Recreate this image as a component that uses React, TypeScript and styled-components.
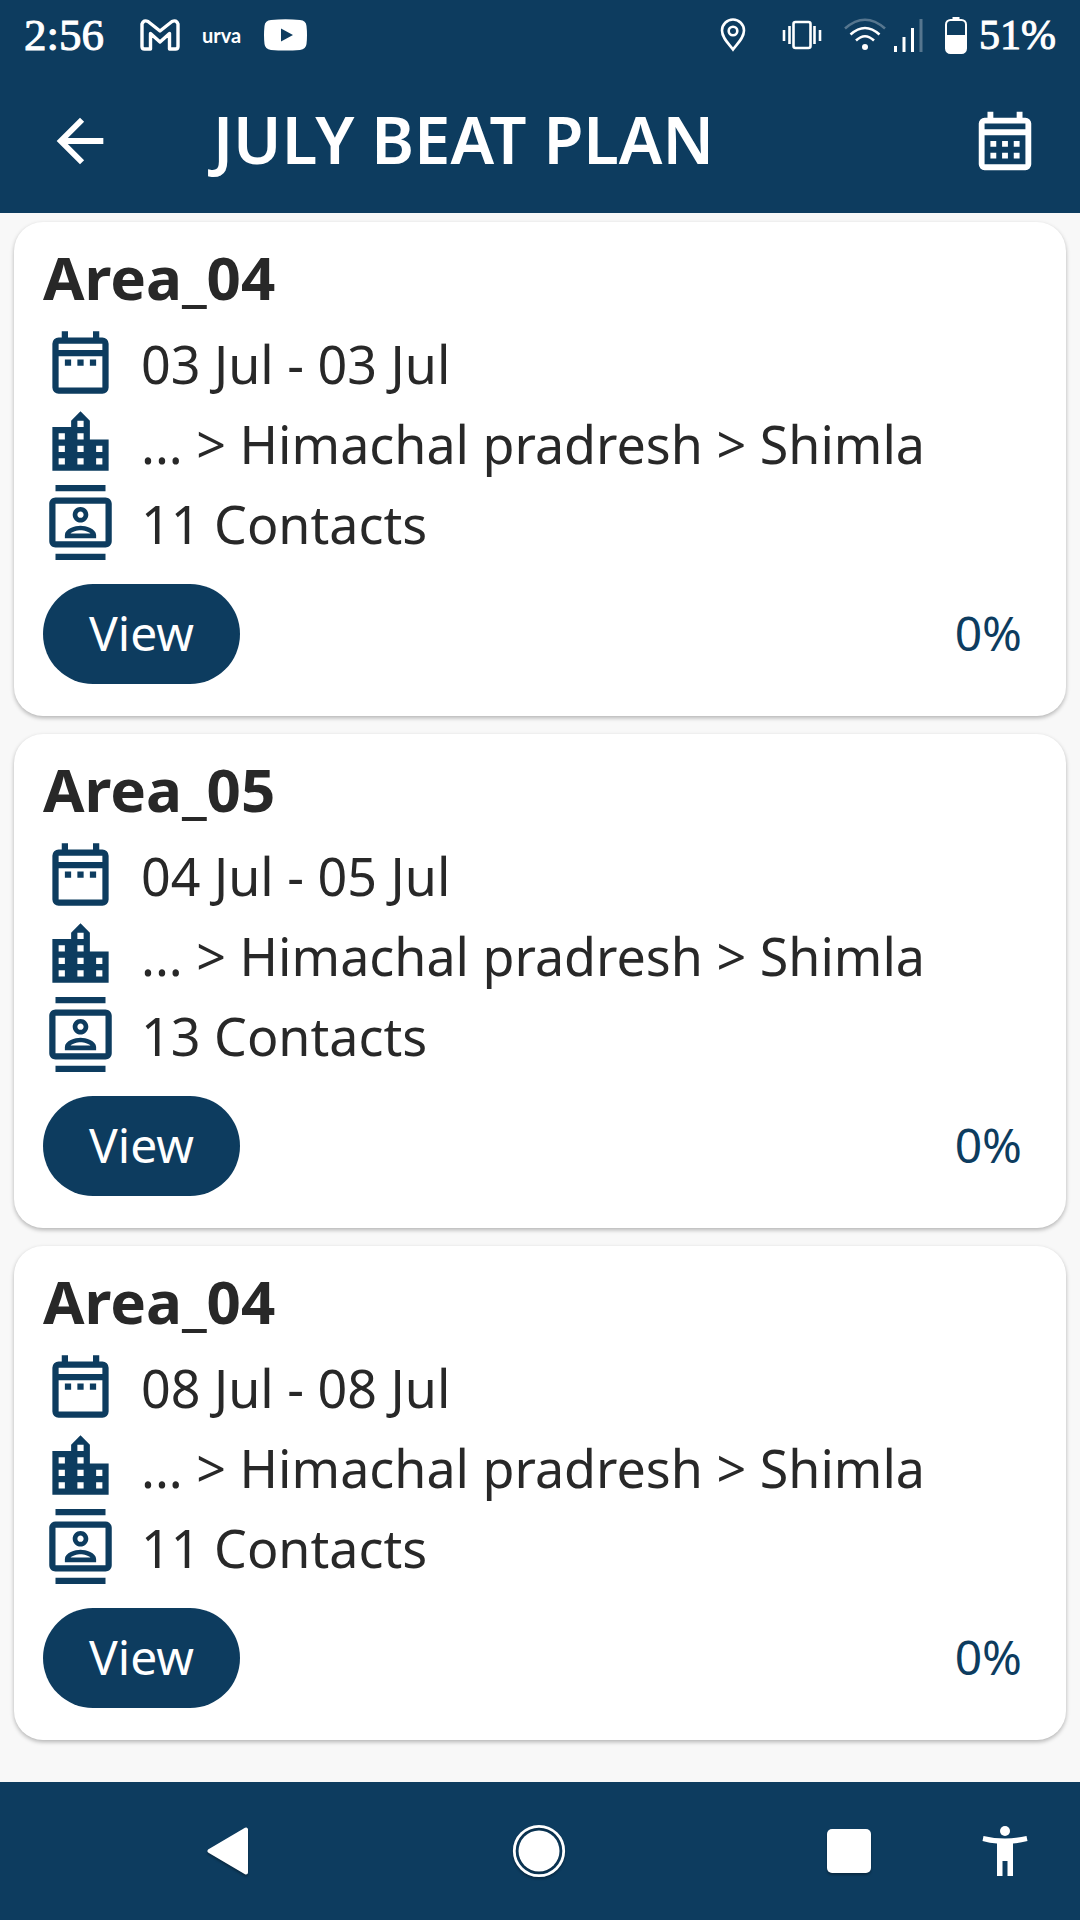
import React from "react";
import styled, { createGlobalStyle } from "styled-components";

const NAVY = "#0d3c5f";
const SANS = '"Noto Sans", "Open Sans", sans-serif';

const GlobalStyle = createGlobalStyle`
  * { box-sizing: border-box; }
  body { margin: 0; background: #f8f8f8; color: #282828; font-family: ${SANS}; }
  h1, h2, p, ul { margin: 0; padding: 0; }
  svg { display: block; flex: none; }
`;

const Screen = styled.div`
  min-height: 100vh;
  display: flex;
  flex-direction: column;
`;

const StatusBar = styled.div`
  height: 70px;
  padding: 0 24px;
  display: flex;
  align-items: center;
  justify-content: space-between;
  background: ${NAVY};
  color: #fff;
`;

const StatusGroup = styled.div<{ $gap: number }>`
  display: flex;
  align-items: center;
  gap: ${(p) => p.$gap}px;
`;

const StatusText = styled.span<{ $size: number; $width?: number }>`
  font: 400 ${(p) => p.$size}px/48px "Liberation Serif", serif;
  -webkit-text-stroke: 1px #fff;
  min-width: ${(p) => p.$width ?? 0}px;
`;

const BrandMark = styled.span`
  width: 40px;
  font: 700 20px/24px Lato, sans-serif;
`;

const AppBar = styled.header`
  height: 143px;
  padding: 0 40px 2px 45px;
  display: flex;
  align-items: center;
  background: ${NAVY};
  color: #fff;
`;

const IconButton = styled.button`
  width: 70px;
  height: 70px;
  padding: 0;
  display: grid;
  place-items: center;
  border: 0;
  background: none;
  color: inherit;
  cursor: pointer;
`;

const Title = styled.h1`
  flex: 1;
  padding: 0 0 4px 98px;
  font-size: 65px;
  line-height: 84px;
  font-weight: 600;
  white-space: nowrap;
`;

const PlanList = styled.ul`
  flex: 1;
  padding: 9px 14px;
  display: flex;
  flex-direction: column;
  gap: 18px;
  list-style: none;
`;

const Card = styled.li`
  padding: 20px 44px 32px 29px;
  border-radius: 29px;
  background: #fff;
  box-shadow: 0 2px 4px rgba(0, 0, 0, 0.28);
`;

const AreaName = styled.h2`
  height: 80px;
  font-size: 60px;
  line-height: 70px;
  font-weight: 700;
`;

const Detail = styled.p`
  height: 80px;
  display: flex;
  align-items: center;
  gap: 23px;
  font-size: 52px;
  line-height: 72px;
  white-space: nowrap;

  svg { color: ${NAVY}; }
`;

const DetailText = styled.span`
  padding-top: 4px;
`;

const CardFooter = styled.div`
  margin-top: 22px;
  display: flex;
  align-items: center;
  justify-content: space-between;
`;

const ViewButton = styled.button`
  width: 197px;
  height: 100px;
  padding: 0 0 3px;
  border: 0;
  border-radius: 50px;
  background: ${NAVY};
  color: #fff;
  font: 400 48px/64px ${SANS};
  cursor: pointer;
`;

const Progress = styled.span`
  padding-bottom: 3px;
  color: ${NAVY};
  font-size: 48px;
  line-height: 64px;
`;

const NavBar = styled.nav`
  height: 138px;
  padding: 0 30px 0 183px;
  display: flex;
  align-items: center;
  gap: 66px;
  background: ${NAVY};
  color: #fff;
`;

const NavMain = styled.div`
  flex: 1;
  display: flex;
  justify-content: space-between;

  svg { filter: drop-shadow(0 2px 1px rgba(0, 0, 0, 0.3)); }
`;

const NavButton = styled(IconButton)`
  width: 90px;
  height: 90px;
`;

const Material = ({ d, size }: { d: string; size: number }) => (
  <svg width={size} height={size} viewBox="0 0 24 24" fill="currentColor" fillRule="evenodd" aria-hidden="true">
    <path d={d} />
  </svg>
);

const FRAME =
  "M6 2h2v2h8V2h2v2h1a2 2 0 0 1 2 2v14a2 2 0 0 1-2 2H5a2 2 0 0 1-2-2V6a2 2 0 0 1 2-2h1zM5 6v2h14V6zM5 10v10h14V10z";
const DATE = FRAME + "M7 11h2v2H7zM11 11h2v2h-2zM15 11h2v2h-2z";
const MONTH = FRAME + "M7 12h2v2H7zM11 12h2v2h-2zM15 12h2v2h-2zM7 16h2v2H7zM11 16h2v2h-2zM15 16h2v2h-2z";
const BACK = "M20 11H7.83l5.59-5.59L12 4l-8 8 8 8 1.41-1.41L7.83 13H20v-2z";
const CITY =
  "M15 11V5l-3-3-3 3v2H3v14h18V11h-6zm-8 8H5v-2h2v2zm0-4H5v-2h2v2zm0-4H5V9h2v2zm6 8h-2v-2h2v2zm0-4h-2v-2h2v2zm0-4h-2V9h2v2zm0-4h-2V5h2v2zm6 12h-2v-2h2v2zm0-4h-2v-2h2v2z";
const CONTACTS =
  "M20 4H4c-1.1 0-2 .9-2 2v12c0 1.1.9 2 2 2h16c1.1 0 2-.9 2-2V6c0-1.1-.9-2-2-2zm0 14H4V6h16v12zM4 0h16v2H4zm0 22h16v2H4zm8-10c1.38 0 2.5-1.12 2.5-2.5S13.38 7 12 7 9.5 8.12 9.5 9.5 10.62 12 12 12zm0-3.5c.55 0 1 .45 1 1s-.45 1-1 1-1-.45-1-1 .45-1 1-1zm5 7.49C17 13.9 13.69 13 12 13s-5 .9-5 2.99V17h10v-1.01zm-8.19-.49c.61-.52 2.03-1 3.19-1 1.17 0 2.59.48 3.2 1H8.81z";

const MailIcon = () => (
  <svg width="40" height="32" viewBox="0 0 40 32" fill="none" stroke="#fff" strokeWidth="3.400" strokeLinejoin="round" aria-hidden="true">
    <path d="M2 5v22.500q0 2.500 2.500 2.500H10.500V14.500L20 23l9.500-8.500v15.500h6q2.500 0 2.500-2.500V5q-1.500-4.500-6-2.500L20 12 8 2.500Q3.500.5 2 5z" />
  </svg>
);

const VideoIcon = () => (
  <svg width="43" height="32" viewBox="0 0 43 32" fill="#fff" fillRule="evenodd" aria-hidden="true">
    <path d="M7 1Q21.500-.5 36 1q6 .5 6.500 6 1 9 0 18-.5 5-6.500 6-14.500 1-29 0-6-1-6.500-6-1-9 0-18Q1 1.500 7 1zM17 9.500v13l12-6.500z" />
  </svg>
);

const PinIcon = () => (
  <svg width="26" height="34" viewBox="0 0 26 34" fill="none" stroke="#fff" strokeWidth="2.600" aria-hidden="true">
    <path d="M13 31.500C8 25 2 19.500 2 12.500a11 11 0 0 1 22 0C24 19.500 18 25 13 31.500z" />
    <circle cx="13" cy="13" r="4.300" />
  </svg>
);

const VibrateIcon = () => (
  <svg width="40" height="32" viewBox="0 0 40 32" fill="none" stroke="#fff" strokeWidth="2.600" aria-hidden="true">
    <rect x="11.500" y="3" width="17" height="26" rx="2" />
    <path d="M7.500 7v18M32.500 7v18M2 11v11M38 11v11" />
  </svg>
);

const WifiIcon = () => (
  <svg width="42" height="34" viewBox="0 0 42 34" fill="none" stroke="#fff" strokeWidth="2.600" aria-hidden="true">
    <path d="M1 10.500Q21-7 41 10.500" opacity=".3" />
    <path d="M6.500 16.500q14.500-13 29 0M12 22.500q9-8.500 18 0" />
    <circle cx="21" cy="29" r="3" fill="#fff" stroke="none" />
  </svg>
);

const SignalIcon = () => (
  <svg width="29" height="34" viewBox="0 0 29 34" fill="#fff" aria-hidden="true">
    <path d="M0 28h3v6H0zM8.500 19h3v15h-3zM17 10h3v24h-3z" />
    <path d="M25.500 1h3v33h-3z" opacity=".3" />
  </svg>
);

const BatteryIcon = () => (
  <svg width="22" height="37" viewBox="0 0 22 37" aria-hidden="true">
    <rect x="1" y="3" width="20" height="33" rx="4.500" fill="none" stroke="#fff" strokeWidth="2" />
    <path d="M7.500 0h7v3h-7zM1 18h20v14q0 4-4 4H5q-4 0-4-4z" fill="#fff" />
  </svg>
);

const plans = [
  { area: "Area_04", dates: "03 Jul - 03 Jul", contacts: 11 },
  { area: "Area_05", dates: "04 Jul - 05 Jul", contacts: 13 },
  { area: "Area_04", dates: "08 Jul - 08 Jul", contacts: 11 },
];

export default function App() {
  return (
    <Screen>
      <GlobalStyle />
      <StatusBar>
        <StatusGroup $gap={22}>
          <StatusText $size={45} $width={94}>2:56</StatusText>
          <MailIcon />
          <BrandMark>urva</BrandMark>
          <VideoIcon />
        </StatusGroup>
        <StatusGroup $gap={36}>
          <PinIcon />
          <StatusGroup $gap={22}>
            <VibrateIcon />
            <StatusGroup $gap={8}>
              <WifiIcon />
              <SignalIcon />
            </StatusGroup>
            <StatusGroup $gap={12}>
              <BatteryIcon />
              <StatusText $size={42}>51%</StatusText>
            </StatusGroup>
          </StatusGroup>
        </StatusGroup>
      </StatusBar>
      <AppBar>
        <IconButton aria-label="Back"><Material d={BACK} size={70} /></IconButton>
        <Title>JULY BEAT PLAN</Title>
        <IconButton aria-label="Calendar"><Material d={MONTH} size={70} /></IconButton>
      </AppBar>
      <PlanList>
        {plans.map((plan) => (
          <Card key={plan.dates}>
            <AreaName>{plan.area}</AreaName>
            <Detail>
              <Material d={DATE} size={75} />
              <DetailText>{plan.dates}</DetailText>
            </Detail>
            <Detail>
              <Material d={CITY} size={75} />
              <DetailText>... &gt; Himachal pradresh &gt; Shimla</DetailText>
            </Detail>
            <Detail>
              <Material d={CONTACTS} size={75} />
              <DetailText>{plan.contacts} Contacts</DetailText>
            </Detail>
            <CardFooter>
              <ViewButton>View</ViewButton>
              <Progress>0%</Progress>
            </CardFooter>
          </Card>
        ))}
      </PlanList>
      <NavBar>
        <NavMain>
          <NavButton aria-label="Back">
            <svg width="42" height="48" viewBox="0 0 42 48" fill="#fff" stroke="#fff" strokeWidth="4" strokeLinejoin="round">
              <path d="M2.500 24L39 2.500v43z" />
            </svg>
          </NavButton>
          <NavButton aria-label="Home">
            <svg width="54" height="54" viewBox="0 0 54 54" fill="#fff">
              <circle cx="27" cy="27" r="20.500" />
              <circle cx="27" cy="27" r="24.700" fill="none" stroke="#fff" strokeWidth="2.800" />
            </svg>
          </NavButton>
          <NavButton aria-label="Recent apps">
            <svg width="44" height="44" viewBox="0 0 44 44" fill="#fff">
              <rect width="44" height="44" rx="5" />
            </svg>
          </NavButton>
        </NavMain>
        <NavButton aria-label="Accessibility">
          <svg width="46" height="50" viewBox="0 0 46 50" fill="#fff">
            <circle cx="23" cy="5" r="5" />
            <path d="M1.500 10Q23 15 44.500 10l1 5Q38 17 31 17.500V50h-5.500V35h-5v15H15V17.500Q8 17 .5 15z" />
          </svg>
        </NavButton>
      </NavBar>
    </Screen>
  );
}
